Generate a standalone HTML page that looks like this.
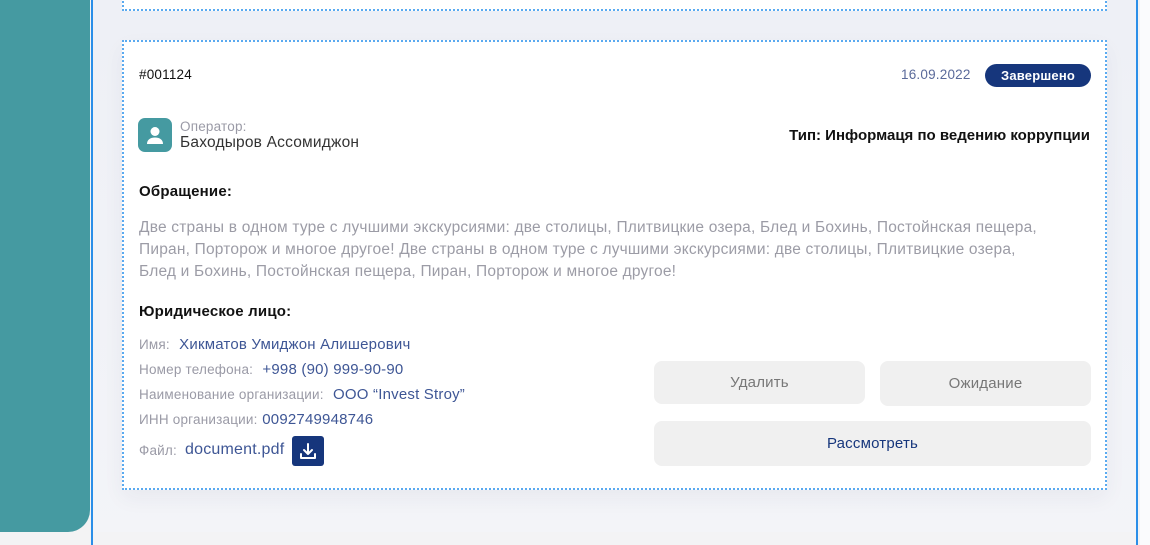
<!DOCTYPE html>
<html><head><meta charset="utf-8"><style>
*{margin:0;padding:0;box-sizing:border-box}
body{width:1150px;height:545px;overflow:hidden;background:#f3f3f4;font-family:"Liberation Sans","DejaVu Sans",sans-serif;position:relative;letter-spacing:.2px}
.side{position:absolute;left:0;top:0;width:90px;height:532px;background:#459aa1;border-bottom-right-radius:22px}
.main{position:absolute;left:91px;top:0;width:1047px;height:545px;background:linear-gradient(#eef0f6,#f3f4f8);border-left:2px solid #2a8ee8;border-right:2px solid #2a8ee8}
.right{position:absolute;left:1140px;top:0;width:10px;height:545px;background:#fafbfd}
.bot{position:absolute;left:93px;top:532px;width:1043px;height:13px;background:#f3f3f5}
.card{position:absolute;background:#fff;border:2px dotted #5aaaf0}
.abs{position:absolute;white-space:nowrap}
.lbl{color:#9a9aa6;font-size:13.5px}
.val{color:#3e5695;font-size:15px}
.btn{position:absolute;background:#f0f0f0;border-radius:8px;text-align:center;font-size:15px;color:#777}
</style></head><body>
<div class="side"></div>
<div class="main"></div>
<div class="right"></div>
<div class="bot"></div>
<div class="card" style="left:122px;top:-10px;width:985px;height:21px;border-top:none"></div>
<div class="card" style="left:122px;top:40px;width:985px;height:450px;box-shadow:0 8px 20px rgba(30,40,80,.05)"></div>
<div class="abs" style="left:139px;top:67px;font-size:13.5px;color:#111">#001124</div>
<div class="abs" style="left:901px;top:67px;font-size:13.5px;color:#5a6a9a">16.09.2022</div>
<div class="abs" style="left:985px;top:64px;width:106px;height:23px;background:#16367c;border-radius:12px;color:#fff;font-size:13px;font-weight:bold;text-align:center;line-height:23px">Завершено</div>
<div class="abs" style="left:138px;top:118px;width:34px;height:34px;background:#459aa1;border-radius:7px">
<svg width="34" height="34" viewBox="0 0 34 34"><circle cx="17" cy="13.5" r="4.5" fill="#fff"/><path d="M9 26c0-4.5 3.5-6.5 8-6.5s8 2 8 6.5z" fill="#fff"/></svg></div>
<div class="abs lbl" style="left:180px;top:119px;font-size:13.5px">Оператор:</div>
<div class="abs" style="left:180px;top:134px;font-size:15.5px;color:#333">Баходыров Ассомиджон</div>
<div class="abs" style="left:760px;top:127px;font-size:15px;font-weight:bold;color:#111;width:330px;text-align:right;letter-spacing:0">Тип: Информаця по ведению коррупции</div>
<div class="abs" style="left:139px;top:183px;font-size:15px;font-weight:bold;color:#111">Обращение:</div>
<div class="abs" style="left:139px;top:217px;font-size:15.5px;color:#9c9ca6;line-height:22px;width:915px;white-space:normal">Две страны в одном туре с лучшими экскурсиями: две столицы, Плитвицкие озера, Блед и Бохинь, Постойнская пещера, Пиран, Порторож и многое другое! Две страны в одном туре с лучшими экскурсиями: две столицы, Плитвицкие озера, Блед и Бохинь, Постойнская пещера, Пиран, Порторож и многое другое!</div>
<div class="abs" style="left:139px;top:303px;font-size:15px;font-weight:bold;color:#111">Юридическое лицо:</div>
<div class="abs" style="left:139px;top:336px"><span class="lbl">Имя:</span>&nbsp; <span class="val">Хикматов Умиджон Алишерович</span></div>
<div class="abs" style="left:139px;top:361px"><span class="lbl">Номер телефона:</span>&nbsp; <span class="val">+998 (90) 999-90-90</span></div>
<div class="abs" style="left:139px;top:386px"><span class="lbl">Наименование организации:</span>&nbsp; <span class="val">ООО “Invest Stroy”</span></div>
<div class="abs" style="left:139px;top:411px"><span class="lbl">ИНН организации:</span>&nbsp;<span class="val">0092749948746</span></div>
<div class="abs" style="left:139px;top:442px"><span class="lbl">Файл:</span></div>
<div class="abs" style="left:185px;top:441px"><span class="val" style="font-size:16px">document.pdf</span></div>
<div class="abs" style="left:292px;top:436px;width:32px;height:30px;background:#16367c;border-radius:3px">
<svg width="32" height="30" viewBox="0 0 32 30"><path d="M16 8v10M12 14l4 4 4-4M9 18v4h14v-4" stroke="#fff" stroke-width="2" fill="none" stroke-linecap="round" stroke-linejoin="round"/></svg></div>
<div class="btn" style="left:654px;top:361px;width:211px;height:43px;line-height:43px">Удалить</div>
<div class="btn" style="left:880px;top:361px;width:211px;height:45px;line-height:45px">Ожидание</div>
<div class="btn" style="left:654px;top:421px;width:437px;height:45px;line-height:45px;color:#16367c">Рассмотреть</div>
</body></html>
